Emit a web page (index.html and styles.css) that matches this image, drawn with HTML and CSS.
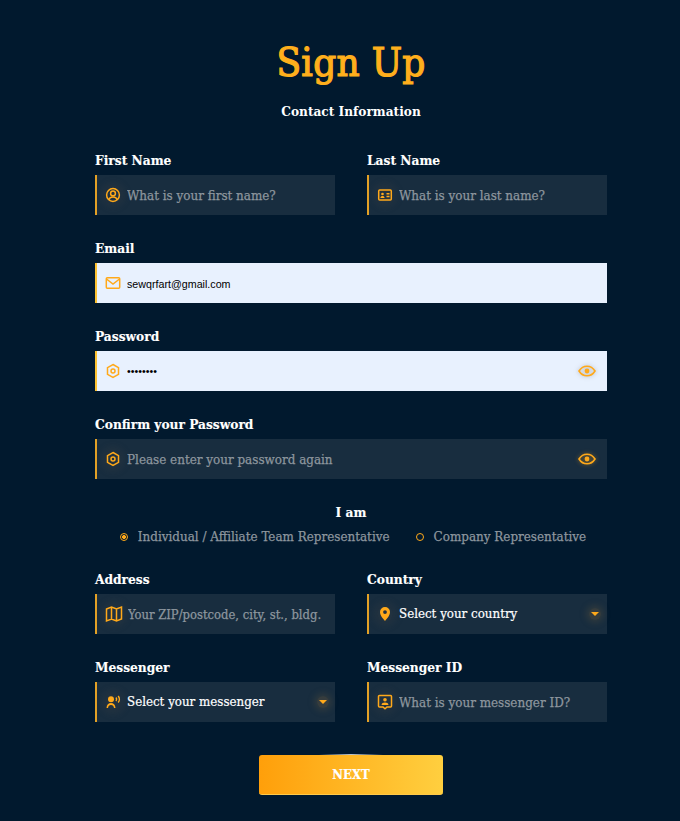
FILE: index.html
```html
<!DOCTYPE html>
<html lang="en">
<head>
<meta charset="utf-8">
<title>Sign Up</title>
<link rel="stylesheet" href="styles.css">
</head>
<body>
<main class="page">
  <h1 class="title">Sign Up</h1>
  <p class="subtitle">Contact Information</p>
  <form class="form">
    <div class="row">
      <div class="group">
        <label class="label">First Name</label>
        <div class="field">
          <span class="icon glow"><svg viewBox="0 0 16 16"><circle cx="8" cy="8" r="6.400"/><circle cx="8" cy="6.400" r="2.400"/><path d="M3.800 12.600c.8-1.900 2.400-2.700 4.200-2.700s3.400.8 4.200 2.700"/></svg></span>
          <input class="input" type="text" placeholder="What is your first name?">
        </div>
      </div>
      <div class="group">
        <label class="label">Last Name</label>
        <div class="field">
          <span class="icon glow"><svg viewBox="0 0 16 16"><rect x="1.700" y="3" width="12.600" height="10" rx="1"/><circle class="fill" cx="5.500" cy="7" r="1.300"/><path class="fill" d="M3.400 11c.2-1.300 1-1.900 2.100-1.900s1.900.6 2.100 1.900z"/><path d="M9.500 6.800h3M9.500 9.500h3"/></svg></span>
          <input class="input" type="text" placeholder="What is your last name?">
        </div>
      </div>
    </div>
    <div class="group">
      <label class="label">Email</label>
      <div class="field filled">
        <span class="icon"><svg viewBox="0 0 16 16"><rect x="1.300" y="2.800" width="13.400" height="10.400" rx="1"/><path d="M1.500 4l6.500 5 6.500-5"/></svg></span>
        <input class="input" type="text" value="sewqrfart@gmail.com">
      </div>
    </div>
    <div class="group">
      <label class="label">Password</label>
      <div class="field filled">
        <span class="icon"><svg viewBox="0 0 16 16"><path d="M8 1.500l5.500 3.200v6.600L8 14.500l-5.500-3.200V4.700z"/><circle cx="8" cy="8" r="2"/></svg></span>
        <input class="input dots" type="password" value="password">
        <span class="eye light"><svg viewBox="0 0 18 12"><path d="M1 6c2-3.200 4.800-4.800 8-4.800s6 1.600 8 4.800c-2 3.200-4.800 4.800-8 4.800S3 9.200 1 6z"/><circle class="fill" cx="9" cy="6" r="2.400"/></svg></span>
      </div>
    </div>
    <div class="group">
      <label class="label">Confirm your Password</label>
      <div class="field">
        <span class="icon glow"><svg viewBox="0 0 16 16"><path d="M8 1.500l5.500 3.200v6.600L8 14.500l-5.500-3.200V4.700z"/><circle cx="8" cy="8" r="2"/></svg></span>
        <input class="input" type="password" placeholder="Please enter your password again">
        <span class="eye"><svg viewBox="0 0 18 12"><path d="M1 6c2-3.200 4.800-4.800 8-4.800s6 1.600 8 4.800c-2 3.200-4.800 4.800-8 4.800S3 9.200 1 6z"/><circle class="fill" cx="9" cy="6" r="2.400"/></svg></span>
      </div>
    </div>
    <div class="role">
      <p class="role-title">I am</p>
      <div class="role-options">
        <span class="radio-option"><span class="radio checked"></span>Individual / Affiliate Team Representative</span>
        <span class="radio-option"><span class="radio"></span>Company Representative</span>
      </div>
    </div>
    <div class="row">
      <div class="group">
        <label class="label">Address</label>
        <div class="field">
          <span class="icon wide glow"><svg viewBox="0 0 18 18"><path d="M1.500 4l5-2 5 2 5-2v12l-5 2-5-2-5 2zM6.500 2v12M11.500 4v12"/></svg></span>
          <input class="input tight" type="text" placeholder="Your ZIP/postcode, city, st., bldg.">
        </div>
      </div>
      <div class="group">
        <label class="label">Country</label>
        <div class="field">
          <span class="icon glow"><svg viewBox="0 0 16 16"><path class="fill" fill-rule="evenodd" d="M8 1a5 5 0 0 1 5 5c0 3.400-3 6.700-5 9-2-2.300-5-5.600-5-9a5 5 0 0 1 5-5zm0 3.200a1.900 1.900 0 1 0 0 3.800 1.900 1.900 0 0 0 0-3.800z"/></svg></span>
          <span class="select-text">Select your country</span>
          <span class="caret-wrap"><span class="caret"></span></span>
        </div>
      </div>
    </div>
    <div class="row">
      <div class="group">
        <label class="label">Messenger</label>
        <div class="field">
          <span class="icon glow"><svg viewBox="0 0 16 16"><circle class="fill" cx="6" cy="5.200" r="3"/><path class="fill" d="M1.500 14c.2-3.400 2-5 4.500-5s4.300 1.600 4.500 5H9c-.2-2-1.300-3-3-3s-2.800 1-3 3z"/><path d="M11 3.500c.8 1 .8 2.500 0 3.500M13.200 2c1.500 1.800 1.500 4.700 0 6.500"/></svg></span>
          <span class="select-text">Select your messenger</span>
          <span class="caret-wrap"><span class="caret"></span></span>
        </div>
      </div>
      <div class="group">
        <label class="label">Messenger ID</label>
        <div class="field">
          <span class="icon glow"><svg viewBox="0 0 16 16"><path d="M2.500 1.500h11a1 1 0 0 1 1 1v9.500a1 1 0 0 1-1 1H10l-2 1.800L6 13H2.500a1 1 0 0 1-1-1V2.500a1 1 0 0 1 1-1z"/><circle class="fill" cx="8" cy="5.800" r="1.800"/><path class="fill" d="M4.500 11c.2-1.800 1.700-2.500 3.500-2.500s3.300.7 3.500 2.500z"/></svg></span>
          <input class="input" type="text" placeholder="What is your messenger ID?">
        </div>
      </div>
    </div>
    <div class="actions">
      <button class="next" type="button">NEXT</button>
    </div>
  </form>
</main>
</body>
</html>
```
FILE: styles.css
```css
* { box-sizing: border-box; }
html, body { margin: 0; padding: 0; }
body {
  background: #01192e;
  font-family: "DejaVu Serif Condensed", "DejaVu Serif", "Liberation Serif", serif;
  color: #fff;
  height: 821px;
  overflow: hidden;
}
.page { width: 512px; margin: 0 auto 0 95px; padding-top: 39px; }
.title {
  margin: 0;
  text-align: center;
  font-size: 40px;
  line-height: 46px;
  height: 48px;
  font-weight: 400;
  color: #ffaf1c;
  -webkit-text-stroke: 1.200px #ffaf1c;
  letter-spacing: .3px;
}
.subtitle {
  margin: 14px 0 0;
  text-align: center;
  font-size: 13.500px;
  line-height: 20px;
  font-weight: 700;
}
.form { display: flex; flex-direction: column; gap: 24px; margin-top: 30px; }
.row { display: grid; grid-template-columns: 240px 240px; column-gap: 32px; }
.group { display: flex; flex-direction: column; min-width: 0; }
.label { font-size: 13.600px; line-height: 18px; font-weight: 700; margin-bottom: 6px; height: 18px; -webkit-text-stroke: .15px #fff; }
.field {
  height: 40px;
  display: flex;
  align-items: center;
  background: #182d3f;
  border-left: 2px solid #e3a126;
  padding-left: 8px;
  color: #fff;
}
.field.filled { background: #e8f1fe; border-left-color: #fdc12f; }
.icon { width: 16px; height: 16px; flex: none; margin-right: 6px; display: block; border-radius: 50%; }
.icon svg { display: block; width: 100%; height: 100%; fill: none; stroke: #ffa91a; stroke-width: 1.500; }
.icon svg .fill, .eye svg .fill { fill: #ffa91a; stroke: none; }
.icon.glow { box-shadow: 0 0 7px 4px rgba(70, 70, 70, .22); background: rgba(70, 70, 70, .22); }
.icon.wide { width: 18px; height: 18px; margin-right: 5px; }
.input {
  flex: 1;
  min-width: 0;
  height: 100%;
  border: 0;
  outline: 0;
  padding: 1px 0 0;
  background: transparent;
  font-family: "Liberation Sans", Arial, sans-serif;
  font-size: 10.700px;
  color: #000;
}
.input.dots { padding-top: 0; }
.input::placeholder {
  font-family: "DejaVu Serif Condensed", "DejaVu Serif", serif;
  font-size: 13.300px;
  color: #8d969e;
  opacity: 1;
  -webkit-text-stroke: .25px #8d969e;
}
.input.tight::placeholder { font-size: 12.900px; }
.eye { width: 18px; height: 12px; flex: none; margin-right: 11px; filter: drop-shadow(0 0 2px rgba(255, 169, 26, .5)); }
.eye.light { filter: drop-shadow(0 0 2px rgba(120, 120, 120, .5)); }
.eye svg { display: block; width: 100%; height: 100%; fill: none; stroke: #ffa91a; stroke-width: 1.600; }
.select-text { flex: 1; font-size: 13.200px; line-height: 18px; padding-bottom: 1px; white-space: nowrap; -webkit-text-stroke: .2px #fff; }
.caret-wrap {
  width: 12px;
  height: 12px;
  flex: none;
  margin-right: 6px;
  display: flex;
  align-items: center;
  justify-content: center;
  border-radius: 50%;
  background: rgba(90, 80, 60, .45);
  box-shadow: 0 0 6px 3px rgba(90, 80, 60, .35);
}
.caret {
  width: 0; height: 0;
  border-left: 4px solid transparent;
  border-right: 4px solid transparent;
  border-top: 4px solid #ffa91a;
}
.role { display: flex; flex-direction: column; align-items: center; }
.role-title { margin: 0; font-size: 13.600px; line-height: 18px; font-weight: 700; -webkit-text-stroke: .15px #fff; }
.role-options { display: flex; gap: 26px; margin-top: 7px; margin-left: 4px; font-size: 13.300px; line-height: 18px; color: #8d969e; -webkit-text-stroke: .25px #8d969e; }
.radio-option { display: flex; align-items: center; white-space: nowrap; }
.radio { width: 8px; height: 8px; border: 1px solid #ffa91a; border-radius: 50%; margin-right: 10px; flex: none; }
.radio.checked { background: radial-gradient(circle, #ffa91a 0 1.800px, transparent 2.200px); }
.actions { display: flex; justify-content: center; margin-top: 9px; }
.next {
  position: relative;
  width: 184px;
  height: 40px;
  border: 0;
  border-bottom: 1px solid #ffc94a;
  border-radius: 3px;
  background: linear-gradient(90deg, #ff9f0a 0%, #ffcf3f 100%);
  color: #fff;
  font-family: inherit;
  font-size: 13px;
  font-weight: 700;
  -webkit-text-stroke: .2px #fff;
}
.next::before {
  content: "";
  position: absolute;
  left: 60px;
  right: 60px;
  top: -1px;
  height: 1px;
  background: linear-gradient(90deg, transparent, rgba(255, 255, 255, .75), transparent);
}
```
